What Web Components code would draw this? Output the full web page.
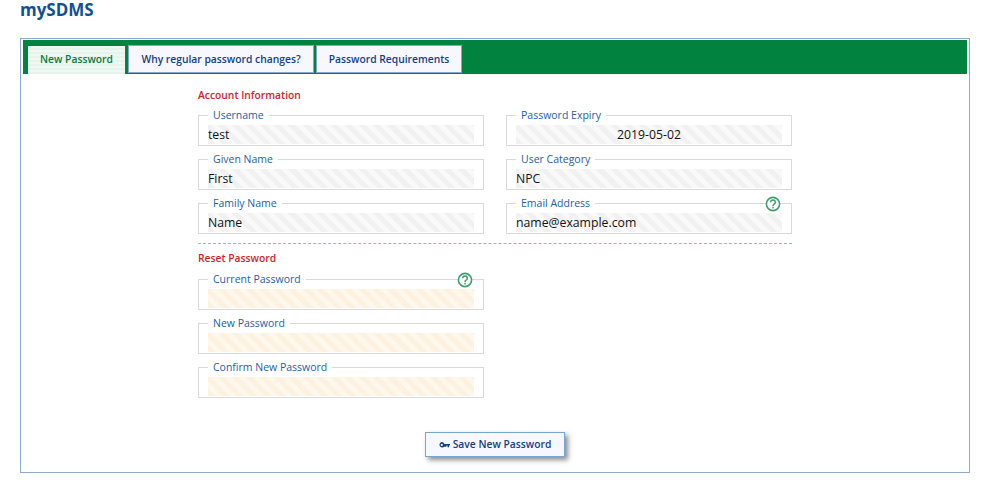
<!DOCTYPE html>
<html lang="en">
<head>
<meta charset="utf-8">
<title>mySDMS</title>
<style>
  html, body { margin: 0; background: #fff; }
  body { font-family: "Open Sans", "Noto Sans", sans-serif; }
</style>
</head>
<body>
<sdms-app>
  <sdms-panel>
    <sdms-tabs slot="tabs"></sdms-tabs>
    <section-title first>Account Information</section-title>
    <form-grid>
      <form-field label="Username" value="test"></form-field>
      <form-field label="Password Expiry" value="2019-05-02" centered></form-field>
      <form-field label="Given Name" value="First"></form-field>
      <form-field label="User Category" value="NPC"></form-field>
      <form-field label="Family Name" value="Name"></form-field>
      <form-field label="Email Address" value="name@example.com" help></form-field>
    </form-grid>
    <hr-dash></hr-dash>
    <section-title>Reset Password</section-title>
    <form-grid>
      <form-field label="Current Password" editable help></form-field>
      <span></span>
      <form-field label="New Password" editable></form-field>
      <span></span>
      <form-field label="Confirm New Password" editable></form-field>
    </form-grid>
    <save-button slot="actions">Save New Password</save-button>
  </sdms-panel>
</sdms-app>

<script>
// Page shell: title and slot for the panel
class SdmsApp extends HTMLElement {
  constructor() {
    super();
    this.attachShadow({ mode: 'open' });
    this.shadowRoot.innerHTML = `
      <style>
        :host { display: block; padding: 0 19px 0 20px; }
        h1 {
          margin: 0;
          height: 38px;
          font: bold 17px/20px "Open Sans", "Noto Sans", sans-serif;
          color: #12508f;
        }
      </style>
      <h1>mySDMS</h1>
      <slot></slot>
    `;
  }
}

class SdmsPanel extends HTMLElement {
  constructor() {
    super();
    this.attachShadow({ mode: 'open' });
    this.shadowRoot.innerHTML = `
      <style>
        :host {
          display: block;
          box-sizing: border-box;
          height: 435px;
          border: 1px solid #8aabcf;
          padding: 1px 2px;
        }
        .body { padding: 14px 0 0 175px; width: 594px; }
        .actions { display: flex; justify-content: center; margin-top: 34px; }
      </style>
      <slot name="tabs"></slot>
      <div class="body"><slot></slot></div>
      <div class="actions"><slot name="actions"></slot></div>
    `;
  }
}

class SdmsTabs extends HTMLElement {
  constructor() {
    super();
    this.attachShadow({ mode: 'open' });
    this.shadowRoot.innerHTML = `
      <style>
        :host {
          display: flex;
          height: 34px;
          box-sizing: border-box;
          background: #02823f;
          padding: 5px 0 0 5px;
          gap: 2px;
          font: 600 10.3px/26px "Open Sans", "Noto Sans", sans-serif;
        }
        div {
          box-sizing: border-box;
          height: 28px;
          text-align: center;
          background: #f7f8ff;
          color: #14407f;
          border: 1px solid #8aa3c8;
        }
        .on {
          border: 0;
          margin: 1px 1px 0 0;
          height: 28px;
          line-height: 26px;
          color: #0b7a43;
          background: repeating-linear-gradient(0deg, #e6f3eb 0 2px, #eef7f1 2px 4px);
        }
      </style>
      <div class="on" style="width:97px">New Password</div>
      <div style="width:186px">Why regular password changes?</div>
      <div style="width:146px">Password Requirements</div>
    `;
  }
}

class SectionTitle extends HTMLElement {
  constructor() {
    super();
    this.attachShadow({ mode: 'open' });
    this.shadowRoot.innerHTML = `
      <style>
        :host {
          display: block;
          box-sizing: border-box;
          height: 27px;
          font: 600 10.3px/13px "Open Sans", "Noto Sans", sans-serif;
          color: #d2232a;
        }
        :host([first]) { padding-top: 1px; }
      </style>
      <slot></slot>
    `;
  }
}

class FormGrid extends HTMLElement {
  constructor() {
    super();
    this.attachShadow({ mode: 'open' });
    this.shadowRoot.innerHTML = `
      <style>
        :host {
          display: grid;
          grid-template-columns: 286px 286px;
          column-gap: 22px;
          row-gap: 13px;
        }
      </style>
      <slot></slot>
    `;
  }
}

class HrDash extends HTMLElement {
  constructor() {
    super();
    this.attachShadow({ mode: 'open' });
    this.shadowRoot.innerHTML = `
      <style>
        :host {
          display: block;
          margin: 9px 0 8px;
          border-top: 1px dashed #8fbfae;
        }
      </style>
    `;
  }
}

// Labelled box with a striped value area
class FormField extends HTMLElement {
  constructor() {
    super();
    this.attachShadow({ mode: 'open' });
    const value = this.getAttribute('value') || '';
    const help = this.hasAttribute('help') ? `
      <svg class="help" width="16" height="16" viewBox="0 0 16 16" aria-hidden="true">
        <circle cx="8" cy="8" r="6.6" fill="#fff" stroke="#3f9e72" stroke-width="1.6"/>
        <path d="M5.7 6.2a2.3 2.3 0 1 1 3.5 2c-.8.5-1.2.9-1.2 1.7" fill="none" stroke="#3f9e72" stroke-width="1.5"/>
        <rect x="7.2" y="10.8" width="1.6" height="1.6" fill="#3f9e72"/>
      </svg>` : '';
    this.shadowRoot.innerHTML = `
      <style>
        :host {
          display: block;
          position: relative;
          box-sizing: border-box;
          height: 31px;
          border: 1px solid #d9d9d9;
          padding: 9px 9px 1px;
          font-family: "Open Sans", "Noto Sans", sans-serif;
        }
        .label {
          position: absolute;
          top: -7px;
          left: 9px;
          padding: 0 5px;
          background: #fff;
          font-size: 10.5px;
          line-height: 13px;
          color: #1c5ea8;
        }
        .value {
          height: 19px;
          font-size: 12.25px;
          line-height: 20px;
          color: #111;
          background: repeating-linear-gradient(45deg, #f1f1f1 0 5px, #f9f9f9 5px 10px);
        }
        :host([editable]) .value {
          background: repeating-linear-gradient(45deg, #fdf1e0 0 5px, #fef7ec 5px 10px);
        }
        :host([centered]) .value { text-align: center; }
        .help { position: absolute; top: -8px; right: 10px; }
      </style>
      <span class="label">${this.getAttribute('label')}</span>
      ${help}
      <div class="value">${value}</div>
    `;
  }
}

class SaveButton extends HTMLElement {
  constructor() {
    super();
    this.attachShadow({ mode: 'open' });
    this.shadowRoot.innerHTML = `
      <style>
        :host {
          display: flex;
          align-items: center;
          justify-content: center;
          gap: 3px;
          box-sizing: border-box;
          width: 140px;
          height: 25px;
          border: 1px solid #74a6d6;
          background: #f7f8ff;
          box-shadow: 3px 3px 5px rgba(0, 0, 0, .45);
          font: 600 10.3px/23px "Open Sans", "Noto Sans", sans-serif;
          color: #14407f;
        }
      </style>
      <svg width="11" height="6" viewBox="0 0 11 6" aria-hidden="true">
        <path fill-rule="evenodd" fill="#14407f" d="M2.8 0a2.8 2.8 0 0 1 2.6 1.9H11v1.7h-1v1.6H8.5V3.6H7.4v1.2H5.2A2.8 2.8 0 1 1 2.8 0zm0 1.8a1.1 1.1 0 1 0 0 2.2 1.1 1.1 0 0 0 0-2.2z"/>
      </svg>
      <slot></slot>
    `;
  }
}

customElements.define('sdms-app', SdmsApp);
customElements.define('sdms-panel', SdmsPanel);
customElements.define('sdms-tabs', SdmsTabs);
customElements.define('section-title', SectionTitle);
customElements.define('form-grid', FormGrid);
customElements.define('hr-dash', HrDash);
customElements.define('form-field', FormField);
customElements.define('save-button', SaveButton);
</script>
</body>
</html>
